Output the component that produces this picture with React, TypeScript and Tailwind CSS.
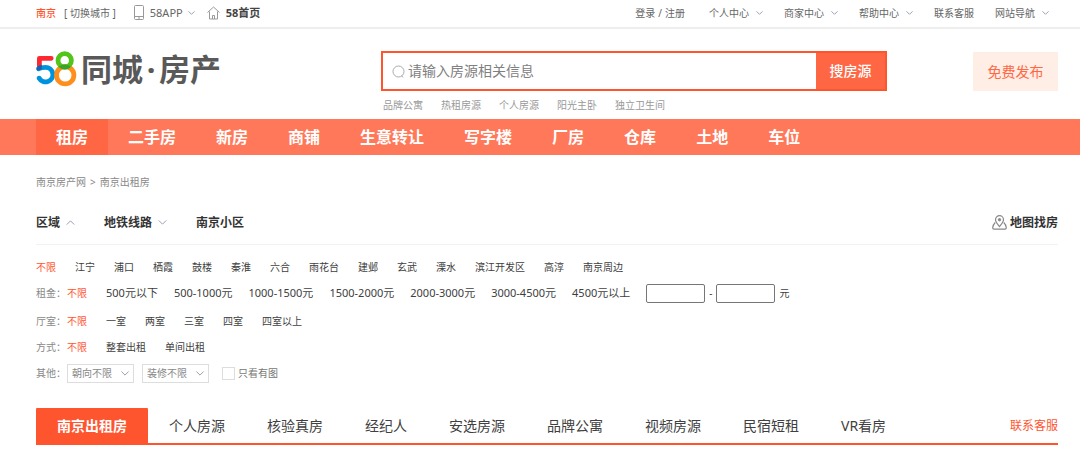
import React from "react";

interface ChevronProps {
  up?: boolean;
  className?: string;
}

const Chevron: React.FC<ChevronProps> = ({ up = false, className = "w-[7px] h-1 text-gray-400" }) => (
  <svg viewBox="0 0 10 6" fill="none" stroke="currentColor" className={`shrink-0 ${className}`} aria-hidden="true">
    <path d={up ? "M0.5 5.5L5 1L9.5 5.5" : "M0.5 0.5L5 5L9.5 0.5"} vectorEffect="non-scaling-stroke" />
  </svg>
);

const userLinks = [
  { label: "个人中心", menu: true },
  { label: "商家中心", menu: true },
  { label: "帮助中心", menu: true },
  { label: "联系客服", menu: false },
  { label: "网站导航", menu: true },
];

const hotWords = ["品牌公寓", "热租房源", "个人房源", "阳光主卧", "独立卫生间"];

const channels = ["租房", "二手房", "新房", "商铺", "生意转让", "写字楼", "厂房", "仓库", "土地", "车位"];

const areas = [
  "不限", "江宁", "浦口", "栖霞", "鼓楼", "秦淮", "六合", "雨花台",
  "建邺", "玄武", "溧水", "滨江开发区", "高淳", "南京周边",
];

const prices = [
  "500元以下", "500-1000元", "1000-1500元", "1500-2000元",
  "2000-3000元", "3000-4500元", "4500元以上",
];

const rooms = ["一室", "两室", "三室", "四室", "四室以上"];

const rentTypes = ["整套出租", "单间出租"];

const tabs = [
  "南京出租房", "个人房源", "核验真房", "经纪人", "安选房源",
  "品牌公寓", "视频房源", "民宿短租", "VR看房",
];

const TopBar = () => (
  <div className="border-b-2 border-[#eeeeee] text-[#666666]">
    <div className="flex h-[27px] items-center justify-between pb-[2px] pl-9 pr-[31px]">
      <div className="flex items-center">
        <a href="#" className="text-[#ff552e] font-medium">南京</a>
        <a href="#" className="ml-2">[ 切换城市 ]</a>
        <a href="#" className="ml-[18px] flex items-center">
          <svg viewBox="0 0 10 15" className="w-[10px] h-[15px]" fill="none" stroke="#999999" aria-hidden="true">
            <rect x="0.5" y="0.5" width="9" height="14" rx="1" />
            <path d="M0.5 11.5H9.5M4 13H6" />
          </svg>
          <span className="ml-[6px] mr-[5px] text-[11px]">58APP</span>
          <Chevron />
        </a>
        <a href="#" className="ml-3 flex items-center font-bold text-[#444444]">
          <svg viewBox="0 0 13 14" className="w-[13px] h-[14px] mr-[6px]" fill="none" stroke="#999999" aria-hidden="true">
            <path d="M0.5 6.5L6.5 1L12.5 6.5M2.5 5.5V13H10.5V5.5M5.5 13V9.5H7.5V13" />
          </svg>
          <span className="text-[11px]">58首页</span>
        </a>
      </div>
      <div className="flex items-center gap-[21px]">
        <span className="mr-[3px] flex gap-[3px]">
          <a href="#">登录</a>/<a href="#">注册</a>
        </span>
        {userLinks.map((link) => (
          <a key={link.label} href="#" className="flex items-center gap-[7px]">
            {link.label}
            {link.menu && <Chevron />}
          </a>
        ))}
      </div>
    </div>
  </div>
);

const Logo = () => (
  <a href="#" className="flex h-9 w-[345px] items-center gap-1">
    <svg viewBox="0 0 41 36" className="w-[41px] h-9" fill="none" strokeWidth="4.800" aria-hidden="true">
      <path d="M15.200 7.300H3.400V15.500" stroke="#ff2832" strokeLinecap="round" strokeLinejoin="round" />
      <path d="M2.600 17.800C4.500 16.400 7 16.300 9.600 16.300A7.300 7.300 0 1 1 3.200 27.200" stroke="#0093dd" strokeLinecap="round" />
      <path d="M1 16.500C2.300 14.600 4.200 14.100 5.800 14.100V18.500L1 19.500Z" fill="#1b5fae" />
      <circle cx="29.200" cy="24.200" r="8.700" stroke="#ff8f1c" />
      <circle cx="28.700" cy="9.400" r="6.700" stroke="#52c41a" />
      <path d="M22.800 15.800C26.500 12.600 31.500 12.600 34.800 15.800C31.500 19.300 26.500 19.300 22.800 15.800Z" fill="#35a52d" />
    </svg>
    <span className="flex text-[31px] leading-9 font-bold text-[#595959]">
      同城<span className="w-4 text-center">·</span>房产
    </span>
  </a>
);

const Header = () => (
  <header className="flex items-start pl-9 pr-[22px] pt-[22px] pb-[6px]">
    <Logo />
    <div>
      <form className="flex h-10 w-[506px] border-2 border-[#ff552e]" onSubmit={(e) => e.preventDefault()}>
        <label className="flex flex-1 items-center gap-[3px] pl-[9px]">
          <svg viewBox="0 0 13 13" className="w-[13px] h-[13px]" fill="none" stroke="#aaaaaa" aria-hidden="true">
            <circle cx="6.5" cy="6.5" r="5.5" />
            <path d="M9.5 10.5L11 12.5" />
          </svg>
          <input
            type="text"
            aria-label="搜索房源"
            placeholder="请输入房源相关信息"
            className="h-full flex-1 pb-[2px] text-[14px] outline-none placeholder:text-[#808080]"
          />
        </label>
        <button type="submit" className="w-[69px] bg-[#ff6744] text-[14px] font-medium text-white">
          搜房源
        </button>
      </form>
      <div className="mt-[6px] flex gap-[18px] pl-[2px] text-[#999999]">
        {hotWords.map((word) => (
          <a key={word} href="#">{word}</a>
        ))}
      </div>
    </div>
    <button type="button" className="ml-auto mt-px h-[39px] w-[85px] bg-[#ffeee6] text-[14px] text-[#ff6744]">
      免费发布
    </button>
  </header>
);

const ChannelNav = () => (
  <nav className="flex h-9 bg-[#ff7859] pl-9 text-[16px] font-bold text-white">
    {channels.map((channel, i) => (
      <a key={channel} href="#" className={`flex items-center px-5 ${i === 0 ? "bg-[#ff6744]" : ""}`}>
        {channel}
      </a>
    ))}
  </nav>
);

interface FilterRowProps {
  label: string;
  children: React.ReactNode;
}

const FilterRow: React.FC<FilterRowProps> = ({ label, children }) => (
  <div className="flex h-[26px] items-center">
    <span className="w-[31px] text-[#888888]">{label}：</span>
    {children}
  </div>
);

const Unlimited = () => (
  <a href="#" className="mr-[19px] text-[#ff552e]">不限</a>
);

const FilterSelect = ({ label }: { label: string }) => (
  <div className="relative mr-2 text-[#888888]">
    <select aria-label={label} className="block h-[19px] w-[67px] appearance-none border border-[#dddddd] pl-1 text-[10px] outline-none">
      <option>{label}</option>
    </select>
    <Chevron className="absolute right-[5px] top-[7px] w-2 h-[5px] text-gray-400" />
  </div>
);

const Filters = () => (
  <section className="text-[#404040]">
    <div className="flex h-11 items-center border-b border-[#f2f2f2] text-[12px] font-bold text-[#333333]">
      <a href="#" className="flex items-center gap-[6px]">
        区域 <Chevron up className="w-[9px] h-[5px] text-gray-400" />
      </a>
      <a href="#" className="ml-[29px] flex items-center gap-[6px]">
        地铁线路 <Chevron className="w-[9px] h-[5px] text-gray-400" />
      </a>
      <a href="#" className="ml-[29px]">南京小区</a>
      <a href="#" className="ml-auto flex items-center gap-[3px]">
        <svg viewBox="0 0 15 15" className="w-[15px] h-[15px]" fill="none" stroke="#888888" aria-hidden="true">
          <path d="M7.5 11.5C5 8.5 3.5 7 3.5 4.7a4 4 0 0 1 8 0C11.5 7 10 8.5 7.5 11.5Z" strokeWidth="1.2" />
          <circle cx="7.5" cy="4.7" r="1.2" fill="#888888" />
          <path d="M3.2 7.5C1.8 9 0.7 11 0.7 12.8c0 1 .5 1.4 1.3 1.4h11c.8 0 1.3-.4 1.3-1.4 0-1.8-1.1-3.8-2.5-5.3" strokeWidth="1.2" />
        </svg>
        地图找房
      </a>
    </div>
    <div className="mt-[9px] flex h-[26px] items-center gap-[19px]">
      {areas.map((area, i) => (
        <a key={area} href="#" className={i === 0 ? "text-[#ff552e]" : ""}>{area}</a>
      ))}
    </div>
    <FilterRow label="租金">
      <Unlimited />
      <div className="flex gap-4 text-[11px]">
        {prices.map((price) => (
          <a key={price} href="#">{price}</a>
        ))}
      </div>
      <div className="ml-4 flex items-center gap-1">
        <input type="text" aria-label="最低租金" className="h-[19px] w-[59px] rounded-[2px] border border-[#767676] px-1" />
        <span>-</span>
        <input type="text" aria-label="最高租金" className="h-[19px] w-[59px] rounded-[2px] border border-[#767676] px-1" />
        <span>元</span>
      </div>
    </FilterRow>
    <div className="mt-[2px]">
      <FilterRow label="厅室">
        <Unlimited />
        <div className="flex gap-[19px]">
          {rooms.map((room) => (
            <a key={room} href="#">{room}</a>
          ))}
        </div>
      </FilterRow>
    </div>
    <FilterRow label="方式">
      <Unlimited />
      <div className="flex gap-[19px]">
        {rentTypes.map((type) => (
          <a key={type} href="#">{type}</a>
        ))}
      </div>
    </FilterRow>
    <FilterRow label="其他">
      <FilterSelect label="朝向不限" />
      <FilterSelect label="装修不限" />
      <label className="ml-[5px] flex items-center gap-[3px] text-[#777777]">
        <input type="checkbox" className="h-[13px] w-[13px] appearance-none border border-[#dddddd] bg-white" />
        只看有图
      </label>
    </FilterRow>
  </section>
);

const ListTabs = () => (
  <div className="mt-[22px] flex h-[37px] items-stretch border-b-2 border-[#ff552e] text-[14px] text-[#404040]">
    {tabs.map((tab, i) => (
      <a
        key={tab}
        href="#"
        className={`flex items-center px-[21px] ${i === 0 ? "rounded-t-[1px] bg-[#ff552e] font-bold text-white" : ""}`}
      >
        {tab}
      </a>
    ))}
    <a href="#" className="ml-auto flex items-center text-[12px] text-[#ff552e]">联系客服</a>
  </div>
);

export default function App() {
  return (
    <div className="min-h-screen bg-white font-['Noto_Sans','Noto_Sans_CJK_SC',sans-serif] text-[10px] leading-4 whitespace-nowrap" lang="zh-CN">
      <TopBar />
      <Header />
      <ChannelNav />
      <main className="pl-9 pr-[22px]">
        <div className="flex gap-1 pt-[19px] pb-[11px] text-[#888888]">
          <a href="#">南京房产网</a>
          <span>&gt;</span>
          <a href="#">南京出租房</a>
        </div>
        <Filters />
        <ListTabs />
      </main>
    </div>
  );
}
